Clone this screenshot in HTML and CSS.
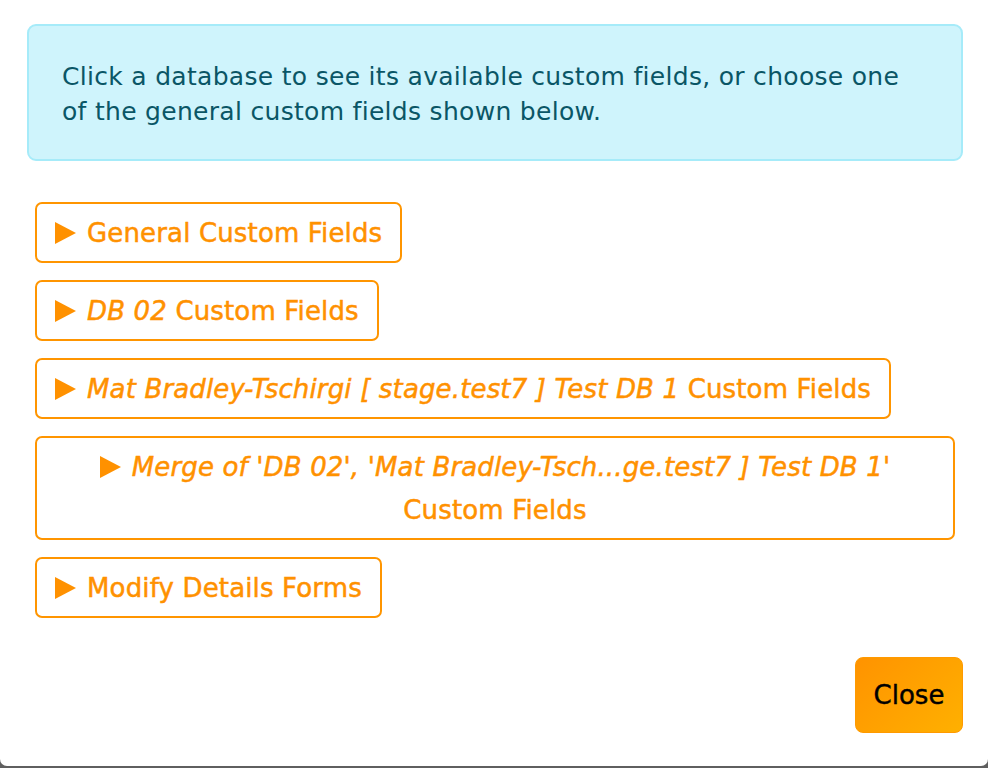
FILE: index.html
```html
<!DOCTYPE html>
<html lang="en">
<head>
<meta charset="utf-8">
<title>Custom Fields</title>
<link rel="stylesheet" href="styles.css">
</head>
<body>
<div class="modal">
  <div class="modal-body">
    <div class="alert">Click a database to see its available custom fields, or choose one of the general custom fields shown below.</div>
    <div class="field-list">
      <button class="field-btn"><svg class="tri" viewBox="0 0 21 22"><polygon points="0,0 21,11 0,22"/></svg>General Custom Fields</button>
      <button class="field-btn"><svg class="tri" viewBox="0 0 21 22"><polygon points="0,0 21,11 0,22"/></svg><em>DB 02</em> Custom Fields</button>
      <button class="field-btn"><svg class="tri" viewBox="0 0 21 22"><polygon points="0,0 21,11 0,22"/></svg><em>Mat Bradley-Tschirgi [ stage.test7 ] Test DB 1</em> Custom Fields</button>
      <button class="field-btn wide"><svg class="tri" viewBox="0 0 21 22"><polygon points="0,0 21,11 0,22"/></svg><em>Merge of 'DB 02', 'Mat Bradley-Tsch...ge.test7 ] Test DB 1'</em> Custom Fields</button>
      <button class="field-btn"><svg class="tri" viewBox="0 0 21 22"><polygon points="0,0 21,11 0,22"/></svg>Modify Details Forms</button>
    </div>
  </div>
  <div class="modal-footer">
    <button class="close-btn">Close</button>
  </div>
</div>
</body>
</html>
```

FILE: styles.css
```css
html, body {
  margin: 0;
  padding: 0;
}
body {
  background: #5f5f5f;
  font-family: "DejaVu Sans", "Noto Sans", sans-serif;
  height: 768px;
  overflow: hidden;
}
.modal {
  background: #ffffff;
  height: 766px;
  border-radius: 0 0 7px 7px;
  display: flex;
  flex-direction: column;
}
.modal-body {
  padding: 24px 25px 0 27px;
}
.alert {
  background: #cff4fc;
  border: 2px solid #a6ebf9;
  border-radius: 9px;
  color: #0a5666;
  font-size: 25px;
  letter-spacing: 0.3px;
  line-height: 35px;
  padding: 33px 55px 30px 33px;
}
.field-list {
  margin-top: 41px;
  padding: 0 8px;
  display: flex;
  flex-direction: column;
  align-items: flex-start;
  gap: 17px;
}
.field-btn {
  font-family: inherit;
  background: #ffffff;
  border: 2px solid #ff9500;
  border-radius: 7px;
  color: #ff9100;
  font-size: 26px;
  font-weight: 400;
  letter-spacing: 0.15px;
  -webkit-text-stroke: 0.5px #ff9100;
  line-height: 43px;
  padding: 8px 18px 6px;
  text-align: center;
  cursor: pointer;
}
.field-btn em {
  font-style: italic;
}
.field-btn.wide {
  align-self: stretch;
}
.tri {
  width: 21px;
  height: 22px;
  fill: #ff9100;
  margin-right: 11px;
  vertical-align: -2px;
}
.modal-footer {
  margin-top: 39px;
  padding-right: 25px;
  display: flex;
  justify-content: flex-end;
}
.close-btn {
  font-family: inherit;
  width: 108px;
  height: 76px;
  border: 1px solid #ff9a00;
  border-radius: 8px;
  background: linear-gradient(135deg, #ff9300 0%, #ffb000 100%);
  color: #000000;
  font-size: 26px;
  font-weight: 400;
  -webkit-text-stroke: 0.4px #000000;
  cursor: pointer;
}
```
